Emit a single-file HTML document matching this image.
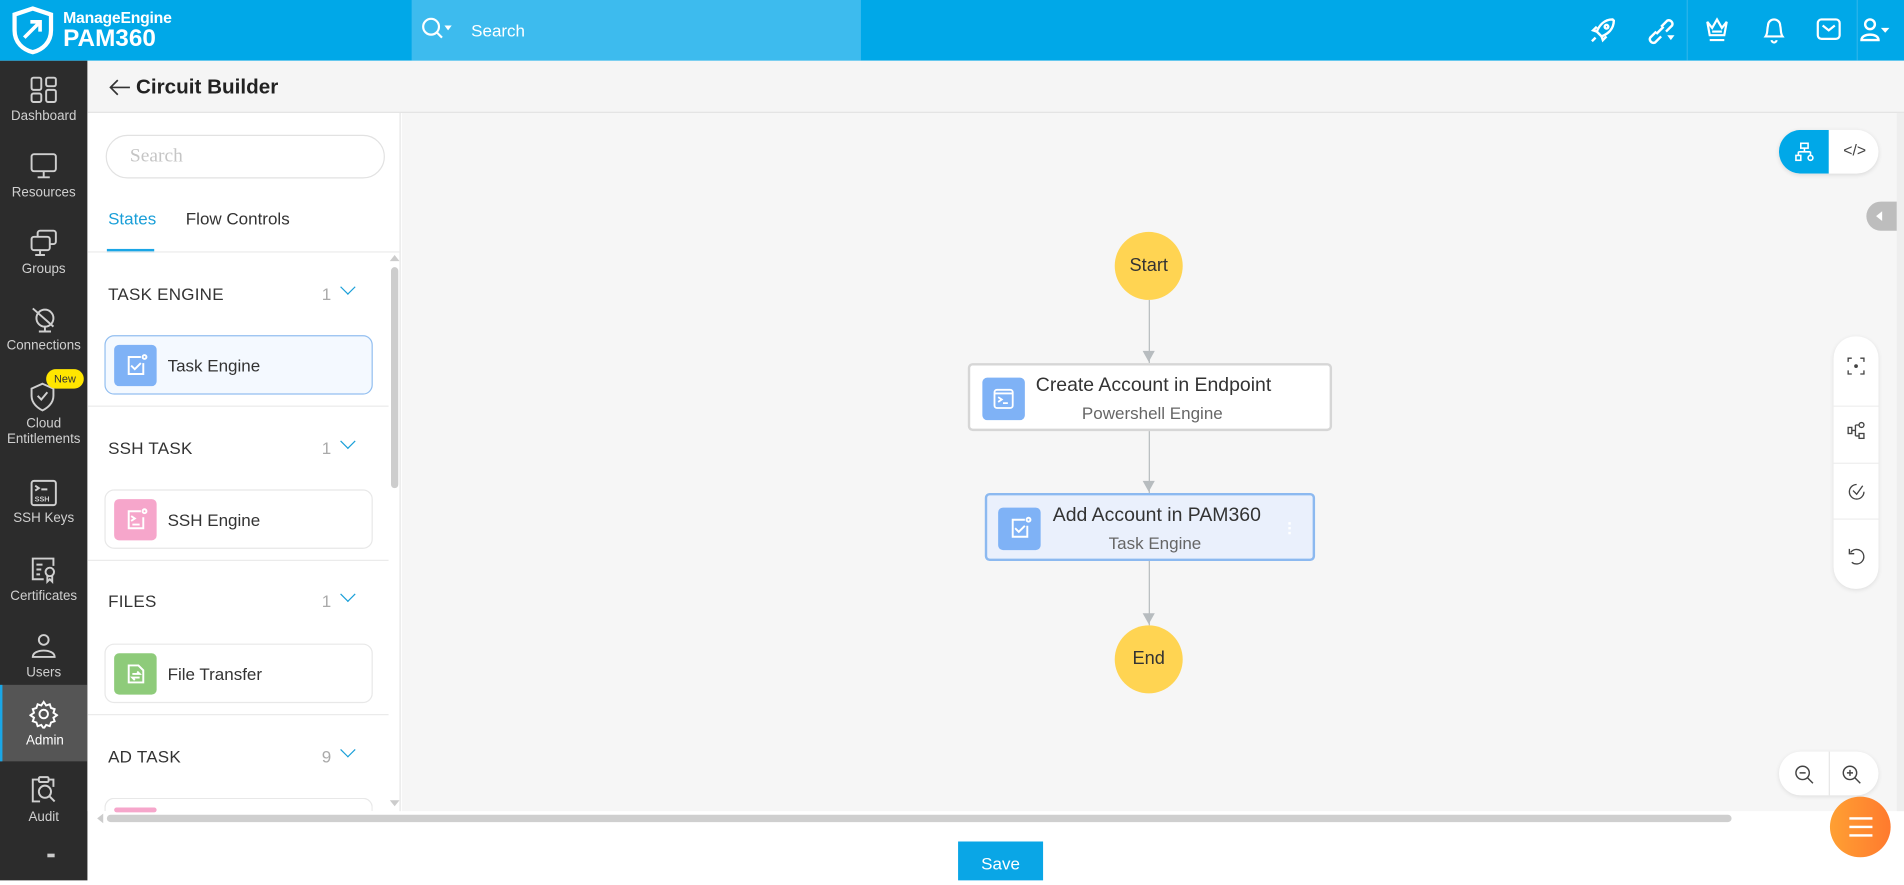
<!DOCTYPE html>
<html><head><meta charset="utf-8">
<style>
*{box-sizing:border-box;margin:0;padding:0}
html,body{width:1904px;height:880px;overflow:hidden;background:#fff;font-family:"Liberation Sans","DejaVu Sans",sans-serif}
#s{position:absolute;left:0;top:0;width:1568px;height:725px;transform:scale(1.21429);transform-origin:0 0;background:#fff}
.a{position:absolute}
.hdr{left:0;top:0;width:1568px;height:50px;background:#00a8e8}
.srch{left:339px;top:0;width:370px;height:50px;background:#3dbbee}
.side{left:0;top:50px;width:72px;height:675px;background:#2c2c2c}
.si{position:absolute;left:0;width:72px;height:63px;color:#d0d0d0;font-size:11px;text-align:center}
.si svg{position:absolute;left:24px;top:12px}
.si span{position:absolute;left:0;right:0;top:40px;line-height:13px}
.tb{left:72px;top:50px;width:1496px;height:43px;background:#f5f5f5;border-bottom:1px solid #e2e2e2}
.lp{left:72px;top:93px;width:258px;height:575px;background:#fff;border-right:1px solid #e6e6e6}
.cv{left:331px;top:93px;width:1237px;height:575px;background:#f6f6f6}
.sec{position:absolute;left:89px;font-size:14px;color:#333;letter-spacing:.2px}
.cnt{position:absolute;left:265px;font-size:14px;color:#aaa}
.chev{position:absolute;left:282px;width:9px;height:9px;border-right:1.6px solid #1a9fd8;border-bottom:1.6px solid #1a9fd8;transform:rotate(45deg)}
.card{position:absolute;left:86px;width:221px;height:49px;border:1px solid #e8e8e8;border-radius:8px;background:#fff}
.card .ic{position:absolute;left:7px;top:7px;width:35px;height:34px;border-radius:4px}
.card .t{position:absolute;left:51px;top:16px;font-size:14px;color:#333}
.div{position:absolute;left:72px;width:248px;height:1px;background:#ebebeb}
.box{position:absolute;background:#fff;border:1px solid #d6d6d6;border-radius:4px}
.circ{position:absolute;width:56px;height:56px;border-radius:50%;background:#ffd452;color:#333;font-size:15px;text-align:center;line-height:56px}
.line{position:absolute;left:946px;width:1px;background:#b7bcbf}
.arr{position:absolute;left:941px;width:0;height:0;border-left:5px solid transparent;border-right:5px solid transparent;border-top:9px solid #b7bcbf}
</style></head><body><div id="s">
<div class="a hdr"></div>
<div class="a srch"></div>
<!-- logo -->
<svg class="a" style="left:8px;top:5px" width="38" height="40" viewBox="0 0 38 40"><path d="M19 2 L34 7 V20 C34 30 27 36 19 38 C11 36 4 30 4 20 V7 Z" fill="none" stroke="#fff" stroke-width="3.5"/><path d="M12 26 L25 13 M17 13 H25 V21" stroke="#fff" stroke-width="3" fill="none"/></svg>
<div class="a" style="left:52px;top:7px;color:#fff;font-size:13px;font-weight:bold;letter-spacing:-.2px">ManageEngine</div>
<div class="a" style="left:52px;top:21px;color:#fff;font-size:20px;font-weight:bold">PAM360</div>
<svg class="a" style="left:347px;top:14px" width="30" height="20" viewBox="0 0 30 20"><circle cx="8" cy="8" r="6.5" fill="none" stroke="#fff" stroke-width="1.8"/><path d="M13 13 L17 17" stroke="#fff" stroke-width="1.8"/><path d="M19 7 h6 l-3 4z" fill="#fff"/></svg>
<div class="a" style="left:388px;top:17px;color:#fff;font-size:14px">Search</div>
<!-- header icons -->
<svg class="a" style="left:1308px;top:13px" width="24" height="24" viewBox="0 0 24 24" fill="none" stroke="#fff" stroke-width="2"><path d="M20 3 C13 3 9 8 7 13 L11 17 C16 15 21 11 21 4 Z"/><circle cx="15" cy="9" r="1.5"/><path d="M7 13 L4 12 L7 9 M11 17 L12 20 L15 17 M3 21 L6 18"/></svg>
<svg class="a" style="left:1355px;top:13px" width="26" height="24" viewBox="0 0 26 24" fill="none" stroke="#fff" stroke-width="2"><path d="M9 13 L4 18 a3 3 0 0 0 4 4 l5-5 M13 9 l5-5 a3 3 0 0 1 4 4 l-5 5 M9 15 l6-6"/><path d="M18 16 h6 l-3 4z" fill="#fff" stroke="none"/></svg>
<div class="a" style="left:1389px;top:0;width:1px;height:50px;background:#2bb4ea"></div>
<svg class="a" style="left:1403px;top:13px" width="22" height="24" viewBox="0 0 22 24" fill="none" stroke="#fff" stroke-width="1.8"><path d="M3 5 L7 10 L11 3 L15 10 L19 5 L17 16 H5 Z M7 13 H15 M5 20 H17"/></svg>
<svg class="a" style="left:1450px;top:13px" width="22" height="24" viewBox="0 0 22 24" fill="none" stroke="#fff" stroke-width="1.8"><path d="M4 17 C6 14 5 12 6 8 a5 5 0 0 1 10 0 C17 12 16 14 18 17 Z M9 20 a2 2 0 0 0 4 0"/></svg>
<svg class="a" style="left:1495px;top:14px" width="22" height="20" viewBox="0 0 22 20" fill="none" stroke="#fff" stroke-width="1.8"><rect x="2" y="2" width="18" height="16" rx="3"/><path d="M6 7 L11 11 L16 7"/></svg>
<div class="a" style="left:1529px;top:0;width:1px;height:50px;background:#2bb4ea"></div>
<svg class="a" style="left:1531px;top:13px" width="26" height="24" viewBox="0 0 26 24" fill="none" stroke="#fff" stroke-width="2"><circle cx="9" cy="7" r="4"/><path d="M2 20 C2 14 16 14 16 20 Z"/><path d="M18 10 h7 l-3.5 4z" fill="#fff" stroke="none"/></svg>
<!-- sidebar -->
<div class="a side">
 <div class="si" style="top:0"><svg width="24" height="24" viewBox="0 0 24 24" fill="none" stroke="#cfcfcf" stroke-width="1.6"><rect x="2" y="2" width="8" height="10" rx="1.5"/><rect x="14" y="2" width="8" height="7" rx="1.5"/><rect x="2" y="15" width="8" height="7" rx="1.5"/><rect x="14" y="12" width="8" height="10" rx="1.5"/></svg><span>Dashboard</span></div>
 <div class="si" style="top:63px"><svg width="24" height="24" viewBox="0 0 24 24" fill="none" stroke="#cfcfcf" stroke-width="1.6"><rect x="2" y="2" width="20" height="14" rx="2"/><path d="M12 16 V21 M7 21 H17"/></svg><span>Resources</span></div>
 <div class="si" style="top:126px"><svg width="24" height="24" viewBox="0 0 24 24" fill="none" stroke="#cfcfcf" stroke-width="1.6"><rect x="7" y="2" width="15" height="11" rx="2"/><rect x="2" y="7" width="15" height="11" rx="2" fill="#2c2c2c"/><path d="M9 18 V22 M5 22 H13"/></svg><span>Groups</span></div>
 <div class="si" style="top:189px"><svg width="24" height="24" viewBox="0 0 24 24" fill="none" stroke="#cfcfcf" stroke-width="1.6"><circle cx="13" cy="11" r="7"/><path d="M3 3 L20 18 M13 18 V22 M8 22 H18"/></svg><span>Connections</span></div>
 <div class="si" style="top:252px;height:80px"><svg width="24" height="26" viewBox="0 0 24 26" fill="none" stroke="#cfcfcf" stroke-width="1.6"><path d="M11 2 L20 6 V12 C20 18 15 22 11 24 C7 22 2 18 2 12 V6 Z"/><path d="M7 12 L10 15 L15 9"/></svg><span style="top:41px">Cloud<br>Entitlements</span></div>
 <div class="a" style="left:38px;top:254px;width:31px;height:16px;border-radius:8px;background:#ffe600;color:#333;font-size:9px;text-align:center;line-height:16px">New</div>
 <div class="si" style="top:332px"><svg width="24" height="24" viewBox="0 0 24 24" fill="none" stroke="#cfcfcf" stroke-width="1.6"><rect x="2" y="2" width="20" height="20" rx="2"/><path d="M5 6 L8 8 L5 10 M10 9 H15"/><text x="4.5" y="19" font-size="6" fill="#cfcfcf" stroke="none" font-weight="bold" font-family="Liberation Sans">SSH</text></svg><span style="top:39px">SSH Keys</span></div>
 <div class="si" style="top:395px"><svg width="24" height="24" viewBox="0 0 24 24" fill="none" stroke="#cfcfcf" stroke-width="1.6"><path d="M12 20 H3 V3 H20 V9"/><path d="M6 8 H11 M6 12 H10 M6 16 H9"/><circle cx="17" cy="14" r="3.5"/><path d="M15 17 V22 L17 20 L19 22 V17"/></svg><span>Certificates</span></div>
 <div class="si" style="top:458px"><svg width="24" height="24" viewBox="0 0 24 24" fill="none" stroke="#cfcfcf" stroke-width="1.6"><circle cx="12" cy="7" r="4"/><path d="M3 21 C3 14 21 14 21 21 Z"/></svg><span>Users</span></div>
 <div class="si" style="top:514px;height:63px;background:#555;border-left:2px solid #1aa6e6;color:#fff"><svg width="24" height="24" viewBox="0 0 24 24" fill="none" stroke="#fff" stroke-width="1.6" style="left:22px"><circle cx="12" cy="12" r="3.5"/><path d="M12 2 l2 3 3-1 1 3 3 1-1 3 3 2-3 2 1 3-3 1-1 3-3-1-2 3-2-3-3 1-1-3-3-1 1-3-3-2 3-2-1-3 3-1 1-3 3 1z"/></svg><span>Admin</span></div>
 <div class="si" style="top:577px"><svg width="24" height="24" viewBox="0 0 24 24" fill="none" stroke="#cfcfcf" stroke-width="1.6"><path d="M8 3 H3 V21 H9 M16 3 H20 V9"/><rect x="8" y="1" width="8" height="4" rx="1"/><circle cx="13" cy="13" r="5"/><path d="M17 17 L21 21"/></svg><span>Audit</span></div>
 <div class="a" style="left:39px;top:653px;width:6px;height:3px;background:#ccc"></div>
</div>
<!-- title -->
<div class="a tb"></div>
<svg class="a" style="left:89px;top:64px" width="20" height="16" viewBox="0 0 20 16" fill="none" stroke="#333" stroke-width="1.4"><path d="M18 8 H2 M8 2 L2 8 L8 14"/></svg>
<div class="a" style="left:112px;top:62px;font-size:17px;font-weight:bold;color:#222">Circuit Builder</div>
<!-- left panel -->
<div class="a lp"></div>
<div class="a" style="left:87px;top:111px;width:230px;height:36px;border:1px solid #e2e2e2;border-radius:18px"></div>
<div class="a" style="left:107px;top:120px;font-size:16px;color:#c5c5c5;font-family:'Liberation Serif',serif">Search</div>
<div class="a" style="left:89px;top:172px;font-size:14px;color:#1a9fd8">States</div>
<div class="a" style="left:153px;top:172px;font-size:14px;color:#333">Flow Controls</div>
<div class="a" style="left:88px;top:205px;width:39px;height:3px;background:#1aa6e6"></div>
<div class="div" style="top:207px;width:258px"></div>
<div class="a" style="left:322px;top:220px;width:6px;height:182px;border-radius:3px;background:#cdcdcd"></div>
<div class="a" style="left:321px;top:210px;width:0;height:0;border-left:4px solid transparent;border-right:4px solid transparent;border-bottom:5px solid #ccc"></div>
<div class="a" style="left:321px;top:659px;width:0;height:0;border-left:4px solid transparent;border-right:4px solid transparent;border-top:5px solid #ccc"></div>

<div class="sec" style="top:234px">TASK ENGINE</div><div class="cnt" style="top:234px">1</div><div class="chev" style="top:232px"></div>
<div class="card" style="top:276px;background:#f4f9ff;border-color:#93bff0"><div class="ic" style="background:#7fb2f6"><svg width="35" height="34" viewBox="0 0 35 34" fill="none" stroke="#fff" stroke-width="1.6"><path d="M22 10 H12 V24 H24 V15"/><circle cx="25" cy="10" r="1.6"/><path d="M14 17 L17 20 L22 15"/></svg></div><div class="t">Task Engine</div></div>
<div class="div" style="top:334px"></div>
<div class="sec" style="top:361px">SSH TASK</div><div class="cnt" style="top:361px">1</div><div class="chev" style="top:359px"></div>
<div class="card" style="top:403px"><div class="ic" style="background:#f6a6cb"><svg width="35" height="34" viewBox="0 0 35 34" fill="none" stroke="#fff" stroke-width="1.6"><path d="M22 10 H12 V24 H24 V15"/><circle cx="25" cy="10" r="1.6"/><path d="M14 14 L17 16 L14 18 M15 21 H21"/></svg></div><div class="t">SSH Engine</div></div>
<div class="div" style="top:461px"></div>
<div class="sec" style="top:487px">FILES</div><div class="cnt" style="top:487px">1</div><div class="chev" style="top:485px"></div>
<div class="card" style="top:530px"><div class="ic" style="background:#8ecb7a"><svg width="35" height="34" viewBox="0 0 35 34" fill="none" stroke="#fff" stroke-width="1.6"><path d="M12 10 H20 L24 14 V24 H12 Z"/><path d="M15 17 H21 L19 15 M21 20 H15 L17 22"/></svg></div><div class="t">File Transfer</div></div>
<div class="div" style="top:588px"></div>
<div class="sec" style="top:615px">AD TASK</div><div class="cnt" style="top:615px">9</div><div class="chev" style="top:613px"></div>
<div class="card" style="top:657px;height:11px;border-bottom:none;border-radius:8px 8px 0 0"><div class="ic" style="background:#f6a6cb;height:4px"></div></div>
<!-- canvas -->
<div class="a cv"></div>
<div class="a" style="left:88px;top:671px;width:1338px;height:6px;border-radius:3px;background:#cfcfcf"></div>
<div class="a" style="left:80px;top:670px;width:0;height:0;border-top:4px solid transparent;border-bottom:4px solid transparent;border-right:5px solid #ccc"></div>
<div class="a" style="left:1562px;top:93px;width:6px;height:575px;background:#eee"></div>
<!-- flow -->
<div class="line" style="top:247px;height:52px"></div><div class="arr" style="top:289px"></div>
<div class="line" style="top:355px;height:51px"></div><div class="arr" style="top:396px"></div>
<div class="line" style="top:462px;height:53px"></div><div class="arr" style="top:505px"></div>
<div class="circ" style="left:918px;top:191px">Start</div>
<div class="circ" style="left:918px;top:515px">End</div>
<div class="box" style="left:797px;top:299px;width:300px;height:56px;border-width:2px">
 <div class="a" style="left:10px;top:10px;width:35px;height:35px;border-radius:4px;background:#7fb2f6"><svg width="35" height="35" viewBox="0 0 35 35" fill="none" stroke="#fff" stroke-width="1.5"><rect x="10" y="10" width="15" height="15" rx="2"/><path d="M10 13 H25 M13 16 L16 18 L13 20 M17 21 H21"/></svg></div>
 <div class="a" style="left:54px;top:8px;font-size:16px;color:#333">Create Account in Endpoint</div>
 <div class="a" style="left:92px;top:31px;font-size:14px;color:#666">Powershell Engine</div>
</div>
<div class="box" style="left:811px;top:406px;width:272px;height:56px;border:2px solid #8cb9f0;background:#eaf0fc">
 <div class="a" style="left:9px;top:10px;width:35px;height:35px;border-radius:4px;background:#7fb2f6"><svg width="35" height="35" viewBox="0 0 35 35" fill="none" stroke="#fff" stroke-width="1.6"><path d="M22 10 H12 V24 H24 V15"/><circle cx="25" cy="10" r="1.6"/><path d="M14 17 L17 20 L22 15"/></svg></div>
 <div class="a" style="left:54px;top:8px;font-size:16px;color:#333">Add Account in PAM360</div>
 <div class="a" style="left:100px;top:31px;font-size:14px;color:#666">Task Engine</div>
 <div class="a" style="left:248px;top:22px;width:2px;height:10px;border-left:2px dotted #fff"></div>
</div>
<!-- right controls -->
<div class="a" style="left:1465px;top:107px;width:82px;height:36px;border-radius:18px;background:#fff;box-shadow:0 1px 4px rgba(0,0,0,.12);overflow:hidden"><div class="a" style="left:0;top:0;width:41px;height:36px;background:#00a8e8"></div>
<svg class="a" style="left:12px;top:9px" width="18" height="18" viewBox="0 0 18 18" fill="none" stroke="#fff" stroke-width="1.3"><rect x="6" y="2" width="6" height="4"/><path d="M9 6 V9 M4 9 H14 M4 9 V12 M14 9 V12"/><rect x="2" y="12" width="4" height="4"/><circle cx="14" cy="14" r="2"/></svg>
<div class="a" style="left:53px;top:9px;font-size:13px;color:#444">&lt;/&gt;</div></div>
<div class="a" style="left:1537px;top:166px;width:25px;height:24px;border-radius:12px 0 0 12px;background:#bdbdbd"></div>
<div class="a" style="left:1545px;top:174px;width:0;height:0;border-top:4px solid transparent;border-bottom:4px solid transparent;border-right:5px solid #fff"></div>
<div class="a" style="left:1510px;top:277px;width:37px;height:208px;border-radius:18px;background:#fff;box-shadow:0 1px 4px rgba(0,0,0,.1)">
 <div class="a" style="left:0;top:57px;width:37px;height:1px;background:#eee"></div>
 <div class="a" style="left:0;top:104px;width:37px;height:1px;background:#eee"></div>
 <div class="a" style="left:0;top:150px;width:37px;height:1px;background:#eee"></div>
 <svg class="a" style="left:11px;top:17px" width="15" height="15" viewBox="0 0 15 15" fill="none" stroke="#444" stroke-width="1.1"><path d="M1 4 V1 H4 M11 1 H14 V4 M14 11 V14 H11 M4 14 H1 V11"/><circle cx="7.5" cy="7.5" r="1" fill="#444"/></svg>
 <svg class="a" style="left:11px;top:70px" width="16" height="15" viewBox="0 0 16 15" fill="none" stroke="#444" stroke-width="1.1"><rect x="1" y="5" width="3" height="5"/><path d="M4 7.5 H7 M7 3 V12 M7 3 H10 M7 12 H10"/><circle cx="12" cy="3" r="2"/><rect x="10" y="10" width="4" height="4"/></svg>
 <svg class="a" style="left:11px;top:120px" width="16" height="16" viewBox="0 0 16 16" fill="none" stroke="#444" stroke-width="1.1"><path d="M14 8 A6 6 0 1 1 8 2"/><path d="M5 7 L8 10 L13 3"/></svg>
 <svg class="a" style="left:11px;top:173px" width="16" height="16" viewBox="0 0 16 16" fill="none" stroke="#444" stroke-width="1.1"><path d="M3 5 A6 6 0 1 1 4 13"/><path d="M2 2 V6 H6"/></svg>
</div>
<div class="a" style="left:1465px;top:619px;width:82px;height:36px;border-radius:18px;background:#fff;box-shadow:0 1px 4px rgba(0,0,0,.1)">
 <div class="a" style="left:41px;top:0;width:1px;height:36px;background:#e6e6e6"></div>
 <svg class="a" style="left:12px;top:10px" width="18" height="18" viewBox="0 0 18 18" fill="none" stroke="#444" stroke-width="1.2"><circle cx="7.5" cy="7.5" r="5.5"/><path d="M5 7.5 H10 M11.5 11.5 L16 16"/></svg>
 <svg class="a" style="left:51px;top:10px" width="18" height="18" viewBox="0 0 18 18" fill="none" stroke="#444" stroke-width="1.2"><circle cx="7.5" cy="7.5" r="5.5"/><path d="M5 7.5 H10 M7.5 5 V10 M11.5 11.5 L16 16"/></svg>
</div>
<div class="a" style="left:1507px;top:656px;width:50px;height:50px;border-radius:50%;background:linear-gradient(90deg,#ffa033,#ff7a2e)"></div>
<div class="a" style="left:1523px;top:673px;width:19px;height:2px;background:#fff;box-shadow:0 7px 0 #fff,0 14px 0 #fff"></div>
<!-- save -->
<div class="a" style="left:789px;top:693px;width:70px;height:32px;background:#0aa6e6;color:#fff;font-size:14px;text-align:center;line-height:36px">Save</div>
</div></body></html>
